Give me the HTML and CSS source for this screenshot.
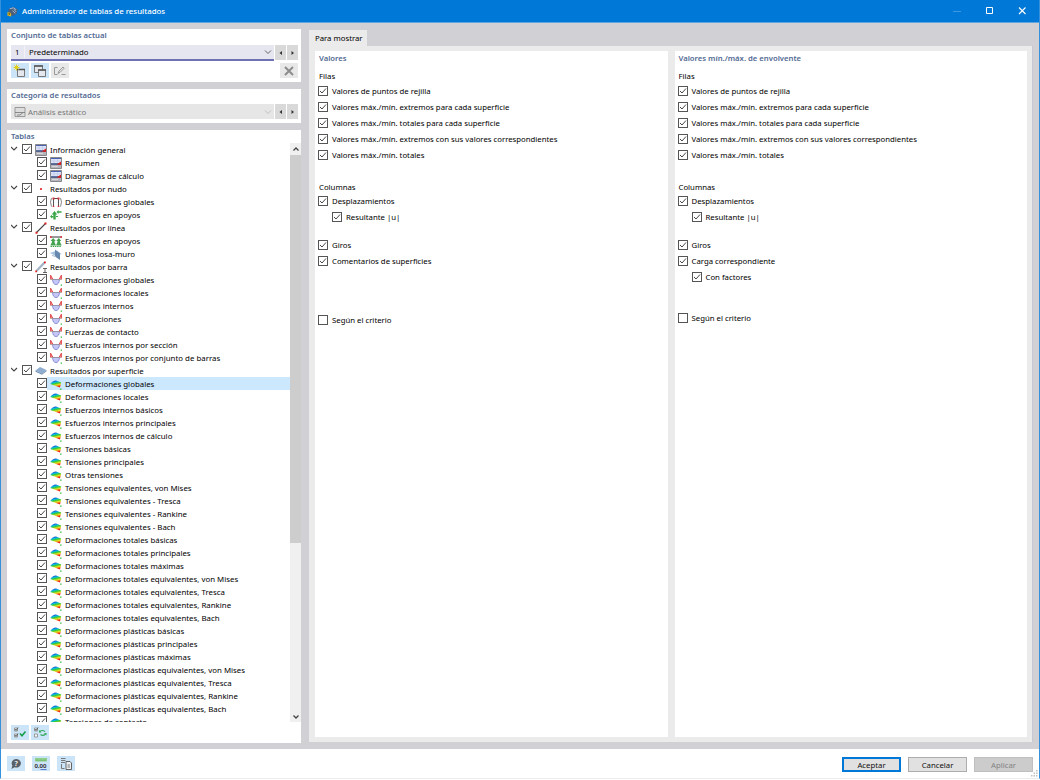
FILE: index.html
```html
<!DOCTYPE html>
<html lang="es">
<head>
    <meta charset="UTF-8">
    <title>Administrador de tablas de resultados</title>
    <link rel="stylesheet" href="styles.css">
</head>
<body>

    <svg class="defs" width="0" height="0">
        <linearGradient id="heat" x1="0" y1="0" x2="0.35" y2="1">
            <stop offset="0.15" stop-color="#1545d0"/>
            <stop offset="0.36" stop-color="#08bce0"/>
            <stop offset="0.54" stop-color="#38cc30"/>
            <stop offset="0.76" stop-color="#e8e020"/>
            <stop offset="1" stop-color="#f02810"/>
        </linearGradient>
        <symbol id="check" viewBox="0 0 10 10"><path d="M2 5l2 2 4-4.500" fill="none" stroke="#333" stroke-width=".9"/></symbol>
        <symbol id="general" viewBox="0 0 12 12">
            <path d="M.5.500h11v11H.500z" fill="#b4b6bc" stroke="#88888c"/>
            <path d="M1 1h10v6H1z" fill="#dfe5f8"/>
            <path d="M1 1.500h10" stroke="#4a62b0"/>
            <path d="M1 4h10M4 2v4M7.500 2v4" stroke="#b9c4e8" stroke-width=".6"/>
            <path d="M1 7h10" stroke="#34487f" stroke-width="1.500"/>
            <path d="M6.500 7.500l4.500-3v3.500z" fill="#d82020"/>
            <path d="M2 9.500h6" stroke="#d8d8dc"/>
        </symbol>
        <symbol id="node" viewBox="0 0 12 12"><circle cx="6" cy="6" r="1.100" fill="#e02020"/></symbol>
        <symbol id="frame" viewBox="0 0 12 12">
            <path d="M3.500 11V2.500h5V11" fill="none" stroke="#555"/>
            <path d="M1.500 10.500Q-.5 6 1.500 2M10.500 10.500Q12.500 6 10.500 2" fill="none" stroke="#888"/>
            <path d="M2.500 1.500h2v2h-2zM7.500 1.500h2v2h-2zM2.700 9.700h1.600V11H2.700zM7.700 9.700h1.600V11H7.700z" fill="#d83030"/>
        </symbol>
        <symbol id="support" viewBox="0 0 12 12">
            <path d="M4.500 2L7.300 5.500H5.700v5H3.300v-5H1.700z" fill="#3aa648"/>
            <path d="M0 7.500l2-1.800v1.300h1.500v1.400H2v1.200z" fill="#3aa648"/>
            <path d="M6.500 3l2-2v1.300h3v1.400h-3V5zM6 7h2v1H6z" fill="#3aa648"/>
        </symbol>
        <symbol id="line" viewBox="0 0 12 12">
            <path d="M1.500 10.500l9-9" stroke="#444" stroke-width="1.100"/>
            <path d="M.5 9.800h2v2h-2zM9.500.500h2v2h-2z" fill="#e02020"/>
        </symbol>
        <symbol id="linesupport" viewBox="0 0 12 12">
            <path d="M0 2h12" stroke="#555" stroke-width="1.200"/>
            <path d="M0 1h1.500v2H0zM10.500 1H12v2h-1.500z" fill="#e04040"/>
            <path d="M3.200 3l2.500 3H4.500v1L6 10.500H.3L2 7V6H.5zM8.800 3l2.500 3H10v1l1.700 3.500H6L7.500 7V6H6.300z" fill="#44a450"/>
            <path d="M.5 11.500h11" stroke="#44a450" stroke-dasharray="1.500 .700"/>
        </symbol>
        <symbol id="wall" viewBox="0 0 12 12">
            <path d="M0 5l7-2.500L11.500 6 6 8z" fill="#a5c2dc"/>
            <path d="M5 1.500l5 4v6.500L5 8.500z" fill="#6688ae"/>
            <path d="M2 7.500l4 1" stroke="#9db6ce"/>
        </symbol>
        <symbol id="member" viewBox="0 0 12 12">
            <path d="M1.500 10L9.500 1.500" stroke="#a6b4c8" stroke-width="2.400"/>
            <path d="M.3 9.500h1.700v1.700H.3zM9 .5h1.800v1.800H9z" fill="#e02020"/>
            <path d="M8 7.500h4M10 7.500v4M8 11.500h4" stroke="#555" stroke-width=".9"/>
        </symbol>
        <symbol id="beam" viewBox="0 0 12 12">
            <path d="M2.500 5.500h7Q9 10.500 6 10.500T2.500 5.500z" fill="#c4c7f5" stroke="#7578cc" stroke-width=".8"/>
            <path d="M.5 2v3.500H3zM11.500 2v3.500H9z" fill="#f29c9c"/>
            <path d="M.7 1v4.500M11.300 1v4.500M.7 1.500l2.300 4M11.300 1.500L9 5.500" fill="none" stroke="#df4040"/>
            <path d="M.7 5.500h10.600" stroke="#999" stroke-width=".7"/>
            <path d="M10.700 10.500h1.200v1.200h-1.200z" fill="#18b828"/>
        </symbol>
        <symbol id="surface" viewBox="0 0 12 12">
            <path d="M.5 5.500L5 2l6.500 3L7 8.500z" fill="#8eadd0"/>
            <path d="M.5 5.500L7 8.500v1.300L.5 6.800zM7 8.500L11.500 5v1.200L7 9.800z" fill="#7392b5"/>
        </symbol>
        <symbol id="result" viewBox="0 0 12 12">
            <path d="M.3 6Q2.500 2.500 6 2.500L11.200 4.500 10 9.500 6 8z" fill="url(#heat)"/>
            <path d="M10.200 10.500h1.300v1.300h-1.300z" fill="#18b828"/>
        </symbol>
    </svg>

    <div class="window">
        <header class="titlebar">
            <svg class="logo" viewBox="0 0 12 12">
                <path d="M2 3l5-2 4.500 2.500-1 5L6 11 1 8z" fill="#4a5e7a"/>
                <path d="M3 3l4-1 3 2M6 5l3 3M7.500 3.500L10 6.500" fill="none" stroke="#a9c2de"/>
                <path d="M.5 6.500l4 1v4l-4-1z" fill="#dfb62a"/>
                <path d="M1.500 8l2 .5-2 1.500" fill="none" stroke="#554000" stroke-width=".7"/>
            </svg>
            <h1>Administrador de tablas de resultados</h1>
            <svg class="controls" viewBox="0 0 80 12">
                <path d="M1 6.500h8" stroke="#3d98e2"/>
                <path d="M34.500 2.500h6v6h-6z" fill="none" stroke="#fff"/>
                <path d="M67 2.500l6.500 6.500M73.500 2.500L67 9" stroke="#fff" stroke-width="1.100"/>
            </svg>
        </header>

        <main>
            <aside>
                <section class="panel set">
                    <h2>Conjunto de tablas actual</h2>
                    <div class="picker">
                        <div class="select active">
                            <span class="num">1</span>
                            <span class="value">Predeterminado</span>
                            <svg class="arrow" viewBox="0 0 8 6"><path d="M1 1.500l3 3 3-3" fill="none" stroke="#555" stroke-width=".9"/></svg>
                        </div>
                        <button class="step"><svg viewBox="0 0 6 6"><path d="M4 1v4L1.500 3z" fill="#333"/></svg></button>
                        <button class="step"><svg viewBox="0 0 6 6"><path d="M1.500 1v4L4 3z" fill="#333"/></svg></button>
                    </div>
                    <div class="tools">
                        <button class="tool">
                            <svg viewBox="0 0 14 14">
                                <path d="M4.500 5.500h7v7h-7z" fill="#e4e7ed" stroke="#777"/>
                                <path d="M4 5.500h8" stroke="#555" stroke-width="1.500"/>
                                <path d="M3.500.500v6M.5 3.500h6M1.400 1.400l4.200 4.200M5.600 1.400L1.400 5.600" stroke="#e2d020"/>
                            </svg>
                        </button>
                        <button class="tool">
                            <svg viewBox="0 0 14 14">
                                <path d="M1.500 2h8v6.500h-8z" fill="#e4e7ed" stroke="#777"/>
                                <path d="M1 2h9" stroke="#555" stroke-width="1.500"/>
                                <path d="M5.500 6h7v6.500h-7z" fill="#e4e7ed" stroke="#777"/>
                                <path d="M5 6h8" stroke="#555" stroke-width="1.500"/>
                            </svg>
                        </button>
                        <button class="tool off">
                            <svg viewBox="0 0 14 14"><path d="M4.500 3.500h-3v7h3M8.500 10.500h4M5 9.500l1-2.500 4-4 1.200 1.200-4 4z" fill="none" stroke="#999"/></svg>
                        </button>
                        <button class="tool off last">
                            <svg viewBox="0 0 14 14"><path d="M3 3l8 8M11 3l-8 8" stroke="#8c8c8c" stroke-width="2"/></svg>
                        </button>
                    </div>
                </section>

                <section class="panel category">
                    <h2>Categoría de resultados</h2>
                    <div class="picker">
                        <div class="select disabled">
                            <svg class="icon" viewBox="0 0 12 12">
                                <path d="M1 1.500h10v9H1z" fill="#ddd" stroke="#999"/>
                                <path d="M1 6.500h10M3 9h3l3-2.500" fill="none" stroke="#888"/>
                            </svg>
                            <span class="value">Análisis estático</span>
                            <svg class="arrow" viewBox="0 0 8 6"><path d="M1 1.500l3 3 3-3" fill="none" stroke="#b5b5b5" stroke-width=".8"/></svg>
                        </div>
                        <button class="step"><svg viewBox="0 0 6 6"><path d="M4 1v4L1.500 3z" fill="#333"/></svg></button>
                        <button class="step"><svg viewBox="0 0 6 6"><path d="M1.500 1v4L4 3z" fill="#333"/></svg></button>
                    </div>
                </section>

                <section class="panel tables">
                    <h2>Tablas</h2>
                    <div class="list">
                        <div class="tree" id="tree"></div>
                        <div class="scrollbar">
                            <svg viewBox="0 0 8 6"><path d="M1.500 4.500L4 2l2.500 2.500" fill="none" stroke="#444" stroke-width="1.300"/></svg>
                            <div class="thumb"></div>
                            <svg viewBox="0 0 8 6"><path d="M1.500 1.500L4 4l2.500-2.500" fill="none" stroke="#444" stroke-width="1.300"/></svg>
                        </div>
                    </div>
                    <div class="tools">
                        <button class="tool">
                            <svg viewBox="0 0 14 14">
                                <path d="M1.500 2h3v3h-3zM1.500 8h3v3h-3z" fill="#f4f8fb" stroke="#888" stroke-width=".8"/>
                                <path d="M2 3l1 1.500L5 1.500M2 9l1 1.500L5 7.500" fill="none" stroke="#444" stroke-width=".8"/>
                                <path d="M7 7.500l2 2.300 3.500-4.300" fill="none" stroke="#14a048" stroke-width="1.600"/>
                            </svg>
                        </button>
                        <button class="tool">
                            <svg viewBox="0 0 14 14">
                                <path d="M1.500 2h3v3h-3zM1.500 8h3v3h-3z" fill="#f4f8fb" stroke="#888" stroke-width=".8"/>
                                <path d="M2 3l1 1.500L5 1.500" fill="none" stroke="#444" stroke-width=".8"/>
                                <path d="M7 5.500Q9 3.500 12 5.500M12.500 8Q10 10.500 7.500 8.500" fill="none" stroke="#32aa5c" stroke-width="1.200"/>
                                <path d="M6 4v2.500h2.500zM13.500 9.500V7H11z" fill="#32aa5c"/>
                            </svg>
                        </button>
                    </div>
                </section>
            </aside>

            <div class="content">
                <div class="tab">Para mostrar</div>
                <div class="page">
                    <section class="column">
                        <h2>Valores</h2>
                        <h3>Filas</h3>
                        <label class="option on">Valores de puntos de rejilla</label>
                        <label class="option on">Valores máx./mín. extremos para cada superficie</label>
                        <label class="option on">Valores máx./mín. totales para cada superficie</label>
                        <label class="option on">Valores máx./mín. extremos con sus valores correspondientes</label>
                        <label class="option on">Valores máx./mín. totales</label>
                        <h3 class="second">Columnas</h3>
                        <label class="option on">Desplazamientos</label>
                        <label class="option on sub">Resultante |u|</label>
                        <label class="option on gap">Giros</label>
                        <label class="option on">Comentarios de superficies</label>
                        <label class="option criterion">Según el criterio</label>
                    </section>
                    <section class="column">
                        <h2>Valores mín./máx. de envolvente</h2>
                        <h3>Filas</h3>
                        <label class="option on">Valores de puntos de rejilla</label>
                        <label class="option on">Valores máx./mín. extremos para cada superficie</label>
                        <label class="option on">Valores máx./mín. totales para cada superficie</label>
                        <label class="option on">Valores máx./mín. extremos con sus valores correspondientes</label>
                        <label class="option on">Valores máx./mín. totales</label>
                        <h3 class="second">Columnas</h3>
                        <label class="option on">Desplazamientos</label>
                        <label class="option on sub">Resultante |u|</label>
                        <label class="option on gap">Giros</label>
                        <label class="option on">Carga correspondiente</label>
                        <label class="option on sub">Con factores</label>
                        <label class="option criterion-env">Según el criterio</label>
                    </section>
                </div>
            </div>
        </main>

        <footer>
            <button class="tool">
                <svg viewBox="0 0 14 14">
                    <path d="M7.500 2a4.500 4.300 0 1 1-2 8.200L2.500 12l.8-3.500A4.500 4.300 0 0 1 7.500 2z" fill="#5a6068"/>
                    <text x="5.600" y="9" class="glyph help">?</text>
                </svg>
            </button>
            <button class="tool">
                <svg viewBox="0 0 14 14">
                    <path d="M1 1h12v3.500H1z" fill="#8ed08a"/>
                    <path d="M3 4V2.500M5 4V3M7 4V2.500M9 4V3M11 4V2.500" stroke="#4f9c4c" stroke-width=".6"/>
                    <text x="0.500" y="11" class="glyph">0,00</text>
                    <path d="M6.500 12.500h6" stroke="#4060c0" stroke-width=".8"/>
                </svg>
            </button>
            <button class="tool">
                <svg viewBox="0 0 14 14">
                    <path d="M2 1.500h4.500M2 3.500h4.500M2 5.500h4" stroke="#777" stroke-width="1.200"/>
                    <path d="M2.500 7v4.500h3" fill="none" stroke="#777"/>
                    <path d="M7 4.500h4l1.500 1.500v6.500H7z" fill="#eef2f5" stroke="#555" stroke-width=".9"/>
                    <path d="M8.500 8h2.500M8.500 10h2.500" stroke="#555" stroke-width=".8"/>
                </svg>
            </button>
            <button class="btn primary">Aceptar</button>
            <button class="btn">Cancelar</button>
            <button class="btn disabled">Aplicar</button>
            <svg class="grip" viewBox="0 0 7 7"><path d="M5 0h1.500v1.500H5zM5 2.500h1.500V4H5zM5 5h1.500v1.500H5zM2.500 2.500H4V4H2.500zM2.500 5H4v1.500H2.500zM0 5h1.500v1.500H0z" fill="#c0c0c0"/></svg>
        </footer>
    </div>

    <script src="tree.js"></script>
</body>
</html>
```
FILE: tree.js
```js
// [icono del grupo, nombre, [[icono, nombre], ...]]
var groups = [
    ['general', 'Información general', [
        ['general', 'Resumen'],
        ['general', 'Diagramas de cálculo']
    ]],
    ['node', 'Resultados por nudo', [
        ['frame', 'Deformaciones globales'],
        ['support', 'Esfuerzos en apoyos']
    ]],
    ['line', 'Resultados por línea', [
        ['linesupport', 'Esfuerzos en apoyos'],
        ['wall', 'Uniones losa-muro']
    ]],
    ['member', 'Resultados por barra', [
        ['beam', 'Deformaciones globales'],
        ['beam', 'Deformaciones locales'],
        ['beam', 'Esfuerzos internos'],
        ['beam', 'Deformaciones'],
        ['beam', 'Fuerzas de contacto'],
        ['beam', 'Esfuerzos internos por sección'],
        ['beam', 'Esfuerzos internos por conjunto de barras']
    ]],
    ['surface', 'Resultados por superficie', [
        ['result', 'Deformaciones globales'],
        ['result', 'Deformaciones locales'],
        ['result', 'Esfuerzos internos básicos'],
        ['result', 'Esfuerzos internos principales'],
        ['result', 'Esfuerzos internos de cálculo'],
        ['result', 'Tensiones básicas'],
        ['result', 'Tensiones principales'],
        ['result', 'Otras tensiones'],
        ['result', 'Tensiones equivalentes, von Mises'],
        ['result', 'Tensiones equivalentes - Tresca'],
        ['result', 'Tensiones equivalentes - Rankine'],
        ['result', 'Tensiones equivalentes - Bach'],
        ['result', 'Deformaciones totales básicas'],
        ['result', 'Deformaciones totales principales'],
        ['result', 'Deformaciones totales máximas'],
        ['result', 'Deformaciones totales equivalentes, von Mises'],
        ['result', 'Deformaciones totales equivalentes, Tresca'],
        ['result', 'Deformaciones totales equivalentes, Rankine'],
        ['result', 'Deformaciones totales equivalentes, Bach'],
        ['result', 'Deformaciones plásticas básicas'],
        ['result', 'Deformaciones plásticas principales'],
        ['result', 'Deformaciones plásticas máximas'],
        ['result', 'Deformaciones plásticas equivalentes, von Mises'],
        ['result', 'Deformaciones plásticas equivalentes, Tresca'],
        ['result', 'Deformaciones plásticas equivalentes, Rankine'],
        ['result', 'Deformaciones plásticas equivalentes, Bach'],
        ['result', 'Tensiones de contacto']
    ]]
];

var box = '<span class="box"><svg viewBox="0 0 10 10"><use href="#check"/></svg></span>';
var expander = '<svg class="expander" viewBox="0 0 8 6"><path d="M1 1l3 3 3-3" fill="none" stroke="#444" stroke-width="1.100"/></svg>';

function row(icon, name, cls, before) {
    return '<div class="row ' + cls + '">' + before + box +
        '<span class="item"><svg class="icon" viewBox="0 0 12 12"><use href="#' + icon + '"/></svg>' +
        '<span class="name">' + name + '</span></span></div>';
}

var html = '';
groups.forEach(function (group) {
    html += row(group[0], group[1], 'group', expander);
    group[2].forEach(function (item, i) {
        var selected = group[0] === 'surface' && i === 0;
        html += row(item[0], item[1], selected ? 'child selected' : 'child', '');
    });
});
document.getElementById('tree').innerHTML = html;

// casillas de las columnas de la derecha
document.querySelectorAll('.option').forEach(function (option) {
    option.insertAdjacentHTML('afterbegin', option.classList.contains('on') ? box : '<span class="box"></span>');
});
```
FILE: styles.css
```css
* {
    box-sizing: border-box;
}
body {
    margin: 0;
    font-family: "Noto Sans", "Open Sans", sans-serif;
    font-size: 7.77px;
    line-height: 12px;
    color: #000;
    background-color: white;
}
.defs {
    position: absolute;
}
svg {
    display: block;
    flex: none;
}
h1, h2, h3 {
    margin: 0;
    font-size: inherit;
    font-weight: 400;
    white-space: nowrap;
}
h1 {
    font-size: 7.85px;
    font-weight: 500;
}
h2 {
    color: #526a94;
    font-size: 7.7px;
    font-weight: 600;
}
button {
    font: inherit;
    padding: 0;
    border: none;
    display: flex;
    align-items: center;
    justify-content: center;
}
.window {
    width: 1040px;
    height: 779px;
    display: flex;
    flex-direction: column;
    border-left: 1px solid #3790dc;
    border-right: 1px solid #3790dc;
    border-bottom: 1px solid #ececec;
}
.titlebar {
    height: 23px;
    display: flex;
    align-items: center;
    padding: 0 7px 0 6px;
    background-color: #0078d7;
    border-bottom: 1px solid #62a5dc;
    color: white;
}
.titlebar .logo {
    width: 11px;
    height: 11px;
    margin-right: 4px;
}
.titlebar h1 {
    flex: 1;
}
.controls {
    width: 80px;
    height: 12px;
}

main {
    height: 726px;
    display: flex;
    gap: 8px;
    padding: 6px 7px 6px 6px;
    background-color: #d0d0d5;
}
aside {
    width: 294px;
    display: flex;
    flex-direction: column;
    gap: 7px;
}
.panel {
    background-color: white;
    padding: 0 3px 0 4px;
}
.set {
    height: 53px;
}
.category {
    height: 34px;
}
.tables {
    flex: 1;
    padding-right: 0;
}
.picker {
    display: flex;
    gap: 1px;
    margin-top: 4px;
}
.category .picker {
    margin-top: 3px;
}
.select {
    flex: 1;
    height: 16px;
    display: flex;
    align-items: center;
    background-color: #e6e6f0;
    padding-right: 2px;
}
.select.active {
    border-bottom: 2px solid #7070b5;
}
.select.disabled {
    height: 15px;
    background-color: #e6e6e6;
    color: #777;
    padding-left: 3px;
}
.select .num {
    width: 14px;
    height: 12px;
    padding-left: 4px;
    border-right: 1px solid #f2f2f8;
}
.select .value {
    flex: 1;
    padding-left: 4px;
}
.select.disabled .value {
    padding-left: 2px;
}
.arrow {
    width: 8px;
    height: 6px;
}
.step {
    width: 11px;
    height: 15px;
    background-color: #d9d9d9;
}
.step svg {
    width: 6px;
    height: 6px;
}
.tools {
    display: flex;
    gap: 2px;
    margin-top: 2px;
}
.tool {
    width: 18px;
    height: 15px;
    background-color: #cce4f7;
}
.tool svg {
    width: 14px;
    height: 14px;
}
.tool.off {
    background-color: #e8e8e8;
}
.tool.last {
    margin-left: auto;
}

.list {
    height: 579px;
    display: flex;
    margin-top: 1px;
}
.tree {
    flex: 1;
    overflow: hidden;
    font-size: 7.87px;
}
.row {
    height: 13px;
    display: flex;
    align-items: center;
}
.expander {
    width: 8px;
    height: 6px;
    margin: -2px 4px 0 -1px;
}
.child {
    padding-left: 26px;
}
.box {
    width: 10px;
    height: 10px;
    flex: none;
    border: 1px solid #555;
    background-color: white;
}
.box svg {
    width: 10px;
    height: 10px;
    margin: -1px;
}
.row .box {
    margin-top: -2px;
}
.item {
    flex: 1;
    height: 13px;
    display: flex;
    align-items: center;
    padding-left: 3px;
    white-space: nowrap;
}
.icon {
    width: 12px;
    height: 12px;
}
.name {
    margin-left: 3px;
}
.selected .item {
    background-color: #cce8ff;
}
.scrollbar {
    width: 11px;
    display: flex;
    flex-direction: column;
    align-items: center;
    padding: 3px 0 2px;
    background-color: #f0f0f0;
}
.scrollbar svg {
    width: 8px;
    height: 6px;
}
.thumb {
    width: 11px;
    height: 388px;
    margin: 3px 0 auto;
    background-color: #cdcdcd;
}
.tables .tools {
    margin-top: 3px;
}

.content {
    flex: 1;
    padding-top: 1px;
}
.tab {
    width: 58px;
    height: 16px;
    padding: 2px 5px 0 6px;
    white-space: nowrap;
    background-color: #ebebeb;
}
.page {
    height: 696px;
    display: flex;
    gap: 7px;
    margin-right: -1px;
    padding: 5px 5px 5px 6px;
    background-color: #ebebeb;
    border-right: 1px solid #c8c8d4;
}
.column {
    flex: 1;
    padding: 1px 4px 1px 3px;
    background-color: white;
}
.column h2 {
    margin: 0 0 6px 1px;
}
.column h3 {
    margin: 0 0 1px 1px;
}
.column .second {
    margin: 18px 0 0 1px;
}
.option {
    height: 16px;
    display: flex;
    align-items: center;
    gap: 4px;
    white-space: nowrap;
}
.sub {
    padding-left: 14px;
}
.gap {
    margin-top: 12px;
}
.criterion {
    margin-top: 43px;
}
.criterion-env {
    margin-top: 25px;
}

footer {
    flex: 1;
    display: flex;
    align-items: flex-start;
    gap: 7px;
    padding: 7px 6px 0 6px;
    position: relative;
}
.btn {
    width: 59px;
    height: 15px;
    margin-top: 1px;
    background-color: #e1e1e1;
    border: 1px solid #adadad;
    color: #111;
}
.primary {
    margin-left: auto;
    border: 2px solid #0078d7;
}
.btn.disabled {
    background-color: #ccc;
    border-color: #bfbfbf;
    color: #838383;
}
.glyph {
    font-size: 6px;
    font-weight: 600;
    fill: #222;
}
.help {
    font-size: 7px;
    fill: white;
}
.grip {
    position: absolute;
    right: 1px;
    bottom: 1px;
    width: 7px;
    height: 7px;
}
```
